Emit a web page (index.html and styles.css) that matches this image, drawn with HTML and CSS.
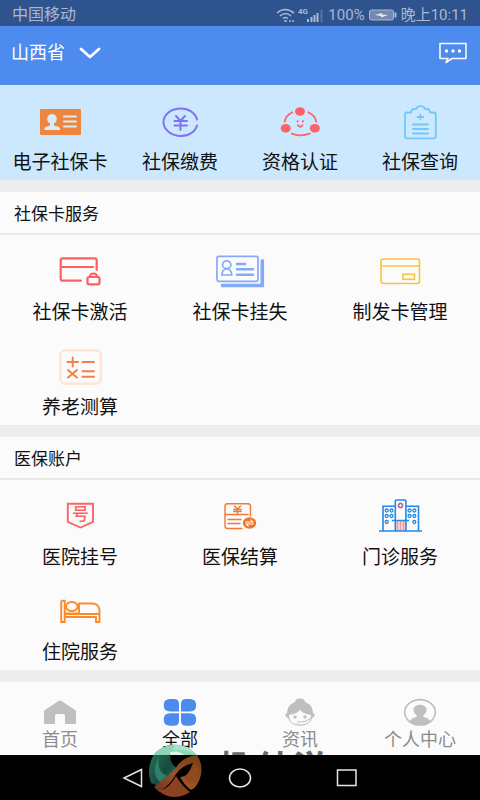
FILE: index.html
```html
<!DOCTYPE html>
<html lang="zh-CN">
<head>
<meta charset="utf-8">
<meta name="viewport" content="width=device-width, initial-scale=1">
<title>社保服务</title>
<link rel="stylesheet" href="styles.css">
</head>
<body>
<div class="status">
  <span>中国移动</span>
  <div class="status-right">
    <svg class="signal" width="48" height="16" viewBox="0 0 48 16" fill="none" stroke="currentColor" stroke-width="1.6">
      <path d="M1 6Q9 -1 18 6M4 9Q9.500 4 15 9M7 11.500Q9.500 9.500 12 11.500"/>
      <path d="M8 14h3M13 14h2M16 14h2" />
      <text class="net" x="22" y="7">4G</text>
      <path d="M32 12v3M35.500 10v5M38.500 8v7M41.500 6v9" stroke-width="2"/><path d="M45.500 3v12" stroke="#59739f" stroke-width="2"/>
    </svg>
    <span>100%</span>
    <svg class="battery" width="28" height="12" viewBox="0 0 28 12"><rect x=".5" y="1" width="24" height="10" rx="2" fill="#7389b1" stroke="#a9b8d3"/><path d="M25.500 3.500h2v5h-2z" fill="#a9b8d3"/><path d="M6 6l7-2v1.500l6 .5-7 2.500V7z" fill="#e5ebf5"/></svg>
    <span>晚上10:11</span>
  </div>
</div>
<header class="header">
  <button class="region" type="button">山西省
    <svg width="22" height="12" viewBox="0 0 22 12" fill="none" stroke="#fff" stroke-width="2.800" stroke-linecap="round" stroke-linejoin="round"><path d="M2 2l9 8 9-8"/></svg>
  </button>
  <button class="message" type="button" aria-label="消息">
    <svg width="30" height="22" viewBox="0 0 30 22"><path d="M2 1.500h26v15H14l-6 4 2-4H2z" fill="none" stroke="#f6fbf0" stroke-width="1.600" stroke-linejoin="round"/><g fill="#fff"><circle cx="8.500" cy="9" r="1.700"/><circle cx="15" cy="9" r="1.700"/><circle cx="21.500" cy="9" r="1.700"/></g></svg>
  </button>
</header>
<main class="main">
  <section class="quick">
    <a class="tile" href="#"><svg class="icon" viewBox="0 0 64 48"><rect x="12" y="12" width="41" height="26" rx="1" fill="#ef8640"/><g fill="#d9ebf7"><ellipse cx="24" cy="22" rx="4.800" ry="5"/><path d="M22 25h4v3.500l5 1.500q1.500 1 1 3H16.500q-.5-2 1-3l4.500-1.500z"/></g><path d="M36 19.500h12M36 24.500h12M36 29.500h12" stroke="#d9ebf7" stroke-width="2" stroke-linecap="round"/></svg>电子社保卡</a>
    <a class="tile" href="#"><svg class="icon" viewBox="0 0 64 48" fill="none" stroke="#7f72f4" stroke-width="2" stroke-linecap="round"><path d="M49 22.500C47 15.500 40.500 11.500 33 11.500C23 11.500 15.500 17.500 15.500 25S23 39 33 39C41 39 47.500 34.500 49 28.500"/><path d="M28 19l4.500 5 4.500-5M26.500 24h12.500M26.500 28.500h12.500M32.500 24v9"/></svg>社保缴费</a>
    <a class="tile" href="#"><svg class="icon" viewBox="0 0 64 48"><g fill="#fd6264"><ellipse cx="32" cy="14.500" rx="5" ry="4.200"/><ellipse cx="17.700" cy="31.300" rx="5" ry="4.200"/><ellipse cx="46.800" cy="31.300" rx="5" ry="4.200"/><circle cx="29.700" cy="24.300" r="1.100"/><circle cx="35" cy="24.300" r="1.100"/></g><path d="M16.700 24.700Q17.700 18.500 24.300 15.300M40.300 15.300Q47 18.500 48.300 24.700M23.700 36.700Q32 40 41.700 36.700M30 28.300q2.300 3 4.500 0" fill="none" stroke="#fd6264" stroke-width="1.800" stroke-linecap="round"/></svg>资格认证</a>
    <a class="tile" href="#"><svg class="icon" viewBox="0 0 64 48" fill="none" stroke="#70c9f8" stroke-width="1.800" stroke-linejoin="round" stroke-linecap="round"><path d="M23 15.500h-4q-2 0-2 2V39q0 2.300 2.500 2.300h26q2.300 0 2.300-2.300V17.500q0-2-2-2H42q0-3.500-4-3.500h-1q-1-2.800-4.500-2.800T28 12h-1q-4 0-4 3.500z"/><path d="M32.300 17.500v5M29.300 20h6M25 27.500h15M25 32h15M25 36.500h15"/></svg>社保查询</a>
  </section>
  <section class="section">
    <h2>社保卡服务</h2>
    <div class="grid">
      <a class="tile" href="#"><svg class="icon" viewBox="0 0 64 48" fill="none" stroke="#fd6062" stroke-width="2.200" stroke-linecap="round" stroke-linejoin="round"><path d="M33 33.700H15q-2.300 0-2.300-2.300V13.500q0-2.200 2.300-2.200h31.500q2.200 0 2.200 2.200V23M13 20h32"/><rect x="39.500" y="30" width="12" height="7.300" rx="1.500"/><path d="M42 30q0-3.500 3.500-3.500T49 30"/></svg>社保卡激活</a>
      <a class="tile" href="#"><svg class="icon" viewBox="0 0 64 48" fill="none" stroke="#84a9f6" stroke-width="1.700" stroke-linecap="round"><rect x="9" y="9.300" width="41" height="25" rx="1.500"/><ellipse cx="18.700" cy="17.700" rx="4.200" ry="3.800"/><path d="M13.800 28q.5-6 5-6t5 6z" stroke-linejoin="round"/><path d="M29 17h8M29 22.300h16M29 27.700h16" stroke-width="2.600"/><path d="M13 38.500h41.300V12.500" stroke-width="3.600" stroke-linecap="butt"/></svg>社保卡挂失</a>
      <a class="tile" href="#"><svg class="icon" viewBox="0 0 64 48" fill="none" stroke="#f9c33e" stroke-width="1.600"><rect x="13" y="12" width="38.500" height="24.500" rx="2.500"/><path d="M13 19h38.500"/><rect x="35" y="27.300" width="11.500" height="5"/></svg>制发卡管理</a>
      <a class="tile" href="#"><svg class="icon" viewBox="0 0 64 48" fill="none" stroke="#ee8249" stroke-width="2" stroke-linecap="round"><rect x="12.300" y="8.300" width="40.500" height="33.500" rx="5" stroke="#ffe5d2" stroke-width="2.500"/><path d="M19.500 20h10.500M24.700 15.500v9M34.500 20h11.500M20 28l9 7.500M29 28l-9 7.500M34.500 29.300h11.500M34.500 34.700h11.500"/></svg>养老测算</a>
    </div>
  </section>
  <section class="section">
    <h2>医保账户</h2>
    <div class="grid">
      <a class="tile" href="#"><svg class="icon" viewBox="0 0 64 48"><path d="M19.800 11.800h25.200v18L32.400 35.500 19.800 29.800z" fill="none" stroke="#fd6468" stroke-width="1.900"/><text class="icon-number" x="32.400" y="28">号</text></svg>医院挂号</a>
      <a class="tile" href="#"><svg class="icon" viewBox="0 0 64 48" fill="none" stroke="#f07a36" stroke-width="1.400" stroke-linecap="round"><path d="M34 36.500H19.500q-2.500 0-2.500-2.500V14q0-2.300 2.500-2.300h20.500q2.500 0 2.500 2.300v10M17 22.500h23M20 27.500h13M20 31.500h12"/><path d="M26.500 14l3 3.300 3-3.300M25.700 17.500h7.600M25.700 19.500h7.600M29.500 17.300v4"/><ellipse cx="41.500" cy="31" rx="6.700" ry="5.700" fill="#f37423" stroke="none"/><path d="M37.800 30h7l-2-2M45.200 32h-7l2 2" stroke="#fff" stroke-width="1.100"/></svg>医保结算</a>
      <a class="tile" href="#"><svg class="icon" viewBox="0 0 64 48" fill="none" stroke="#2389e8" stroke-width="1.600"><path d="M27 28.500h11V39H27z" fill="#ffc8c8" stroke="none"/><path d="M29.500 29v10M32.500 29v10M35.500 29v10" stroke="#e99b9e" stroke-width="1"/><path d="M11 39h43M15 39V14.200h12M27.300 39V8.800q0-.8 1-.8h8.600q1 0 1 .8V39M38 14.200h12.500V39M24 28.500h17"/><g stroke-width="1.300"><circle cx="18.700" cy="18.500" r="1.500"/><circle cx="23.500" cy="18.500" r="1.500"/><circle cx="18.700" cy="24" r="1.500"/><circle cx="23.500" cy="24" r="1.500"/><circle cx="18.700" cy="30" r="1.500"/><circle cx="41.500" cy="18.500" r="1.500"/><circle cx="46.300" cy="18.500" r="1.500"/><circle cx="41.500" cy="24" r="1.500"/><circle cx="46.300" cy="24" r="1.500"/><circle cx="46.300" cy="30" r="1.500"/></g><circle cx="32.500" cy="13.500" r="2.500" fill="#ef6577" stroke="#8d5a9c" stroke-width=".8"/><path d="M32.500 12v3M31 13.500h3" stroke="#fff" stroke-width=".8"/></svg>门诊服务</a>
      <a class="tile" href="#"><svg class="icon" viewBox="0 0 64 48" fill="none" stroke="#f98b2e" stroke-width="1.900"><path d="M13.200 13.800h3.500V30H48v5h3.500V22.500q-1-6-7.500-6H31V26.500H16.700M16.700 30v5h-3.500V13.800M16.700 27h34.500"/><ellipse cx="23.800" cy="19.500" rx="5.800" ry="4.500"/></svg>住院服务</a>
    </div>
  </section>
</main>
<nav class="tabs">
  <a class="tab" href="#"><svg viewBox="0 0 40 36"><path d="M18.500 7q1.500-1 3 0L35 16q1 .7 1 2V28.500q0 1.500-1.500 1.500H25V22q0-2-2-2h-6q-2 0-2 2v8H5.500Q4 30 4 28.500V18q0-1.300 1-2z" fill="#bfbfbf"/></svg>首页</a>
  <a class="tab active" href="#" aria-current="page"><svg viewBox="0 0 40 36" fill="#4d8cee"><path d="M10 5h4q5 0 5 5v7.500H10q-6.300 0-6.300-6.200T10 5zM26 5h4q6.200 0 6.200 6.300T30 17.500h-9V10q0-5 5-5zM10 19.300h9V27q0 4.700-5 4.700h-4q-6.300 0-6.300-6.200T10 19.300zM21 19.300h9q6.200 0 6.200 6.200T30 31.700h-4q-5 0-5-4.700z"/></svg>全部</a>
  <a class="tab" href="#"><svg viewBox="0 0 40 36"><path d="M15 8q.5-3.500 5-3.500T25.200 8q7.500 2.500 7.800 11 2 .5 1.700 2.500-.2 2-2.200 2Q29 31.700 20 31.700T7.500 23.500q-2 0-2.200-2-.3-2 1.700-2.500.3-8.500 8-11z" fill="#bfbfbf"/><path d="M9 21q8-1 11-5 3 4 11 5 0 9.500-11 9.500T9 21z" fill="#fbfbfb"/><g fill="#bfbfbf"><circle cx="15" cy="23" r="1.700"/><circle cx="25" cy="23" r="1.700"/></g><path d="M17 28h3q5 1 11-4" fill="none" stroke="#bfbfbf"/></svg>资讯</a>
  <a class="tab" href="#"><svg viewBox="0 0 40 36"><ellipse cx="20" cy="18.300" rx="15.300" ry="12.700" fill="none" stroke="#bfbfbf" stroke-width="1.600"/><path d="M20 10.800c4 0 6.500 2.200 6.500 5.300 0 2.500-1.500 4-3 5v2q4 .5 7.500 4.400-4.500 3.500-11 3.500T9 27.500q3.500-3.900 7.500-4.400v-2c-1.500-1-3-2.500-3-5 0-3.100 2.500-5.300 6.500-5.300z" fill="#bfbfbf"/></svg>个人中心</a>
  <span class="mark-text">趣他游</span>
</nav>
<footer class="system">
  <button type="button" aria-label="返回"><svg viewBox="0 0 24 24"><path d="M20.500 3.500v17L3 12z"/></svg></button>
  <button type="button" aria-label="主屏幕"><svg viewBox="0 0 24 24"><ellipse cx="12" cy="12" rx="10.500" ry="9"/></svg></button>
  <button type="button" aria-label="最近任务"><svg viewBox="0 0 24 24"><rect x="2.500" y="4" width="18.500" height="15.500"/></svg></button>
  <svg class="mark-logo" viewBox="0 0 54 54">
    <defs><clipPath id="top"><path d="M0 0h54v11H0z"/></clipPath>
    <linearGradient id="g" x1="0" y1="0" x2="1" y2="1"><stop offset="0" stop-color="#2d7563"/><stop offset=".6" stop-color="#174b3d"/><stop offset="1" stop-color="#39836b"/></linearGradient>
    <linearGradient id="o" x1="1" y1="0" x2="0" y2="1"><stop offset="0" stop-color="#713b16"/><stop offset=".55" stop-color="#9c5428"/><stop offset="1" stop-color="#6f3019"/></linearGradient></defs>
    <path d="M5 12Q12 2 25 .5L22 8Q21 20 30 25Q20 30 12 43L3 39Q-2 26 5 12z" fill="url(#g)"/>
    <path d="M11 12Q8 27 19 32L12 38Q2 29 11 12z" fill="#2e806a"/>
    <path d="M27 25Q35 12 49 11Q55 20 53 31Q50 43 43 46Q37 42 32 33Q40 34 45 19Q33 22 28 30Q23 40 11 48L6 43Q17 35 27 25z" fill="url(#o)"/>
    <path d="M28 32Q34 42 42 48Q35 53 25 53Q16 52 11 47Q22 44 28 32z" fill="#8a421f"/>
    <path d="M36 33Q45 31 47 19L50 24Q48 34 41 39z" fill="#93481f"/>
    <g clip-path="url(#top)"><path d="M5 12Q12 2 25 .5Q40-.5 49 11H24q-2-2-4 1z" fill="#8bd5b8"/><path d="M22 8Q31 6 36 11H22z" fill="#def5ea"/><path d="M27 1Q40 1 47 10Q37 5 25 6z" fill="#a9e3cc"/></g>
  </svg>
</footer>
</body>
</html>
```
FILE: styles.css
```css
* { box-sizing: border-box; }
body {
  margin: 0;
  min-height: 100vh;
  display: flex;
  flex-direction: column;
  background: #ededed;
  color: #111;
  font-family: Roboto, "Noto Sans CJK SC", sans-serif;
  font-size: 19px;
  line-height: 24px;
}
a { color: inherit; text-decoration: none; }
button { padding: 0; border: 0; background: none; color: inherit; font: inherit; }
svg { display: block; }

.status {
  display: flex;
  justify-content: space-between;
  align-items: center;
  height: 26px;
  padding: 3px 12px 0;
  background: #2f538d;
  color: #a9b8d3;
  font-size: 16px;
}
.status-right { display: flex; align-items: center; gap: 4px; font-size: 15px; }
.net { fill: currentColor; stroke: none; font: bold 8px Roboto, sans-serif; }

.header {
  display: flex;
  justify-content: space-between;
  align-items: center;
  height: 59px;
  padding: 0 12px 5px 11px;
  background: #4d8cee;
  color: #fff;
  font-size: 18px;
}
.region { display: flex; align-items: center; gap: 14px; }

.main { display: flex; flex-direction: column; gap: 12px; padding-bottom: 12px; }
.quick { display: grid; grid-template-columns: repeat(4, 1fr); background: #cce8ff; }
.section { background: #fbfbfb; }
.section h2 {
  margin: 0;
  padding: 10px 14px 7px;
  border-bottom: 2px solid #e8e8e8;
  font-size: 17px;
  font-weight: 400;
}
.grid { display: grid; grid-template-columns: repeat(3, 1fr); }
.tile {
  display: flex;
  flex-direction: column;
  align-items: center;
  gap: 6px;
  padding: 12px 0 5px;
  white-space: nowrap;
}
.icon { width: 64px; height: 48px; }
.icon-number {
  fill: #fd6468;
  font: 500 17px "Noto Sans CJK SC", sans-serif;
  text-anchor: middle;
}

.tabs {
  position: relative;
  display: grid;
  grid-template-columns: repeat(4, 1fr);
  flex: 1;
  overflow: hidden;
  background: #fbfbfb;
  color: #8b8b8b;
  font-size: 18px;
  line-height: 20px;
}
.tab { display: flex; flex-direction: column; align-items: center; padding: 12px 0 5px; }
.tab svg { width: 40px; height: 36px; }
.active { color: #111; }
.mark-text {
  position: absolute;
  top: 68px;
  left: 217px;
  color: #6b6b6b;
  font-size: 38px;
  font-weight: 700;
  line-height: 40px;
}

.system {
  position: relative;
  display: flex;
  justify-content: center;
  align-items: center;
  gap: 83px;
  height: 45px;
  background: #000;
}
.system button svg { width: 24px; height: 24px; fill: none; stroke: #e6e6e6; stroke-width: 1.5; }
.mark-logo { position: absolute; left: 148px; top: -11px; width: 54px; height: 54px; }
```
